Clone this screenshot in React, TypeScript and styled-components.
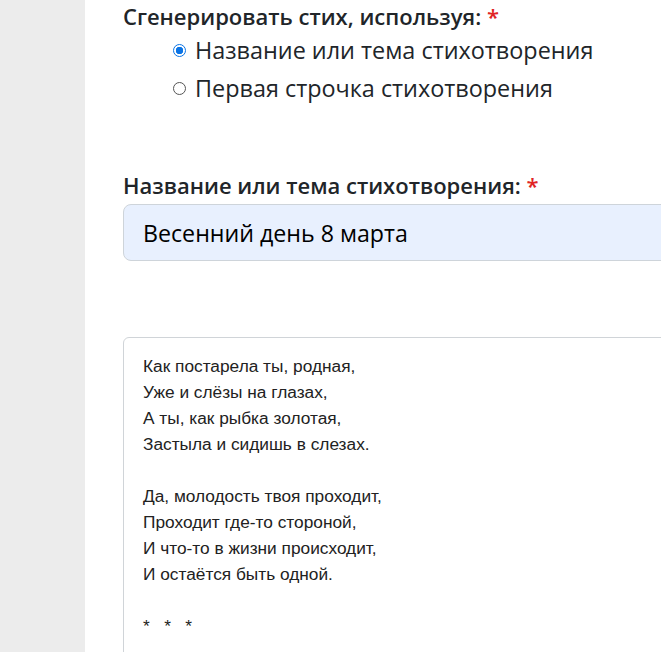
import React from "react";
import styled, { createGlobalStyle } from "styled-components";

const Global = createGlobalStyle`
  html, body { margin: 0; padding: 0; background: #ececec; overflow: hidden; }
  body { font-family: "Open Sans", "Noto Sans", sans-serif; color: #212529; }
`;

const Page = styled.div`
  display: flex;
  height: 652px;
`;
const Side = styled.div`
  width: 85px;
  flex: none;
  background: #ececec;
`;
const Main = styled.div`
  flex: 1;
  background: #fff;
  padding: 2px 0 0 38px;
  overflow: hidden;
`;
const Label = styled.div<{ $mt?: number }>`
  font-size: 22px;
  font-weight: 600;
  line-height: 28px;
  margin-top: ${(p) => p.$mt ?? 0}px;
  white-space: nowrap;
  color: #212529;
`;
const Star = styled.span`
  color: #e02424;
`;
const Radios = styled.div`
  padding-left: 50px;
  margin-top: 1px;
  display: flex;
  flex-direction: column;
`;
const RadioRow = styled.label`
  display: flex;
  align-items: center;
  gap: 9px;
  font-size: 23.4px;
  line-height: 38px;
  white-space: nowrap;
`;
const Dot = styled.span<{ $on?: boolean }>`
  width: 13px;
  height: 13px;
  border-radius: 50%;
  box-sizing: border-box;
  border: ${(p) => (p.$on ? "1px solid #0b74e5" : "1px solid #555")};
  background: ${(p) => (p.$on ? "radial-gradient(circle, #0b74e5 0 3.5px, #fff 4px)" : "#fff")};
  flex: none;
`;
const Input = styled.div`
  margin-top: 5px;
  height: 57px;
  width: 700px;
  box-sizing: border-box;
  background: #e8f0fe;
  border: 1px solid #ced4da;
  border-radius: 8px;
  display: flex;
  align-items: center;
  padding-left: 19px;
  font-size: 23.2px;
  color: #000;
  white-space: nowrap;
`;
const Area = styled.div`
  margin-top: 76px;
  width: 700px;
  height: 400px;
  box-sizing: border-box;
  border: 1px solid #d0d4d8;
  border-radius: 6px;
  padding: 15px 19px;
  font-family: "Liberation Sans", Arial, sans-serif;
  font-size: 17.3px;
  line-height: 26px;
  color: #222;
  white-space: pre;
`;

const poem = `Как постарела ты, родная,
Уже и слёзы на глазах,
А ты, как рыбка золотая,
Застыла и сидишь в слезах.

Да, молодость твоя проходит,
Проходит где-то стороной,
И что-то в жизни происходит,
И остаётся быть одной.

*   *   *`;

export default function App() {
  return (
    <>
      <Global />
      <Page>
        <Side />
        <Main>
          <Label>Сгенерировать стих, используя: <Star>*</Star></Label>
          <Radios>
            <RadioRow><Dot $on />Название или тема стихотворения</RadioRow>
            <RadioRow><Dot />Первая строчка стихотворения</RadioRow>
          </Radios>
          <Label $mt={64}>Название или тема стихотворения: <Star>*</Star></Label>
          <Input>Весенний день 8 марта</Input>
          <Area>{poem}</Area>
        </Main>
      </Page>
    </>
  );
}
